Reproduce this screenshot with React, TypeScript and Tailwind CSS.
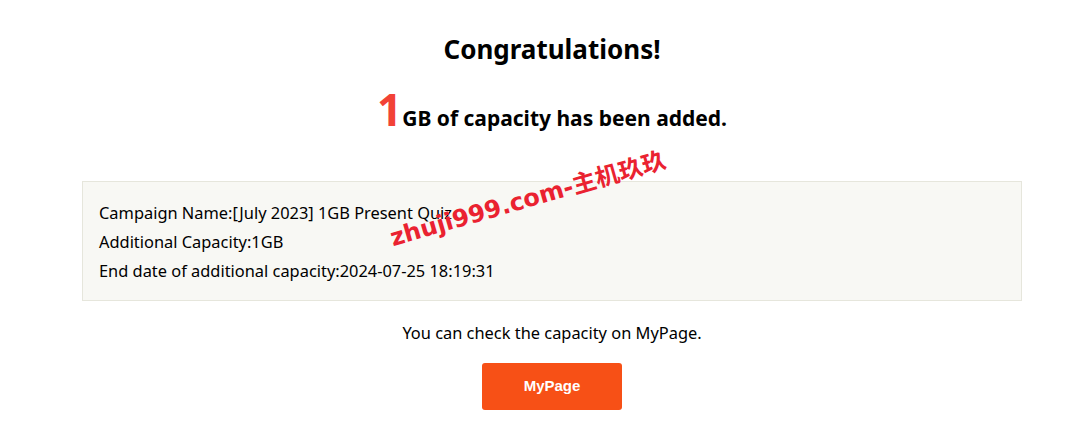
import React from 'react';

const bodyFont = { fontFamily: '"Noto Sans", "Open Sans", sans-serif' };

export default function App() {
  return (
    <div className="relative h-[440px] w-[1075px] overflow-hidden bg-white text-black" style={bodyFont}>
      <div className="ml-[82px] flex w-[940px] flex-col items-center">
        <h1 className="mt-[30px] text-[26px] font-bold leading-[38px]">Congratulations!</h1>
        <p className="mt-[19px] flex items-baseline text-[21px] font-bold leading-[44px]">
          <span className="text-[44px] leading-[44px] text-[#f24236]">1</span>
          <span>GB of capacity has been added.</span>
        </p>

        <div className="mt-[41px] w-full border border-[#e6e6dc] bg-[#f8f8f4] px-[16px] pb-[15px] pt-[16px] text-[16.4px] leading-[29px]">
          <p>Campaign Name:[July 2023] 1GB Present Quiz</p>
          <p>Additional Capacity:1GB</p>
          <p>End date of additional capacity:2024-07-25 18:19:31</p>
        </div>

        <p className="mt-[20px] text-[16.4px] leading-[24px]">You can check the capacity on MyPage.</p>
        <button
          className="mt-[18px] h-[47px] w-[140px] rounded-[3px] bg-[#f75016] text-[15px] font-bold text-white"
          style={{ fontFamily: '"Liberation Sans", Arial, sans-serif' }}
        >
          MyPage
        </button>
      </div>

      {/* watermark */}
      <div
        className="absolute left-[394px] top-[226px] origin-bottom-left -rotate-[16deg] whitespace-nowrap text-[24px] font-bold leading-none text-[#ea2230]"
        style={{ fontFamily: '"DejaVu Sans", "Noto Sans CJK SC", sans-serif' }}
      >
        zhuji999.com-主机玖玖
      </div>
    </div>
  );
}
